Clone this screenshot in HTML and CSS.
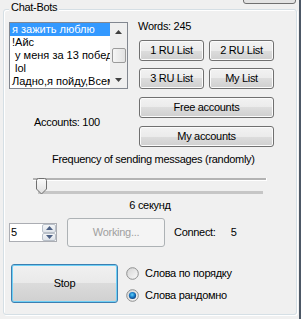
FILE: index.html
```html
<!DOCTYPE html>
<html>
<head>
<meta charset="utf-8">
<link rel="stylesheet" href="styles.css">
</head>
<body>
<div class="window">
  <div class="main">
    <div class="topbtn"></div>
    <div class="group">
      <span class="legend">Chat-Bots</span>
      <div class="r1">
        <div class="listbox">
          <ul class="items">
            <li class="sel">я зажить люблю</li>
            <li>!Айс</li>
            <li> у меня за 13 побед</li>
            <li> lol</li>
            <li>Ладно,я пойду,Всем</li>
          </ul>
          <div class="vscroll">
            <div class="sb-btn"><svg width="7" height="4" viewBox="0 0 7 4"><polygon points="0,4 3.5,0 7,4" fill="#404040"/></svg></div>
            <div class="sb-track"><div class="sb-thumb"></div></div>
            <div class="sb-btn"><svg width="7" height="4" viewBox="0 0 7 4"><polygon points="0,0 7,0 3.5,4" fill="#404040"/></svg></div>
          </div>
        </div>
        <div class="lists">
          <div class="words">Words: 245</div>
          <div class="btngrid">
            <button class="btn">1 RU List</button>
            <button class="btn">2 RU List</button>
            <button class="btn">3 RU List</button>
            <button class="btn">My List</button>
          </div>
        </div>
      </div>
      <div class="r2">
        <div class="acc-label">Accounts: 100</div>
        <div class="acc-btns">
          <button class="btn">Free accounts</button>
          <button class="btn">My accounts</button>
        </div>
      </div>
      <div class="freq">Frequency of sending messages (randomly)</div>
      <div class="slider">
        <div class="track"></div>
        <div class="ticks"></div>
        <svg class="thumb" width="11" height="17" viewBox="0 0 11 17">
          <defs>
            <linearGradient id="tg" x1="0" y1="0" x2="0" y2="1">
              <stop offset="0" stop-color="#fbfbfb"/>
              <stop offset="1" stop-color="#dedede"/>
            </linearGradient>
          </defs>
          <path d="M0.5,2.5 Q0.5,0.5 2.5,0.5 H8.5 Q10.5,0.5 10.5,2.5 V11 L5.5,16 L0.5,11 Z" fill="url(#tg)" stroke="#6f6f6f"/>
        </svg>
      </div>
      <div class="secs">6 секунд</div>
      <div class="r6">
        <div class="spin">
          <span class="spin-val">5</span>
          <div class="updown">
            <div class="ud"><svg width="7" height="4" viewBox="0 0 7 4"><polygon points="0,4 3.5,0 7,4" fill="#4d6185"/></svg></div>
            <div class="ud"><svg width="7" height="4" viewBox="0 0 7 4"><polygon points="0,0 7,0 3.5,4" fill="#4d6185"/></svg></div>
          </div>
        </div>
        <button class="btn working" disabled>Working...</button>
        <span class="connect">Connect:</span>
        <span class="cval">5</span>
      </div>
      <div class="r7">
        <button class="btn stop">Stop</button>
        <div class="radios">
          <label class="radio">
            <svg width="13" height="13" viewBox="0 0 13 13">
              <defs>
                <linearGradient id="rg1" x1="0" y1="0" x2="1" y2="1">
                  <stop offset="0" stop-color="#d3d3d3"/>
                  <stop offset="1" stop-color="#fbfbfb"/>
                </linearGradient>
              </defs>
              <circle cx="6.5" cy="6.5" r="5.8" fill="url(#rg1)" stroke="#8e8f8f"/>
            </svg>
            <span>Слова по порядку</span>
          </label>
          <label class="radio">
            <svg width="13" height="13" viewBox="0 0 13 13">
              <defs>
                <linearGradient id="rg2" x1="0" y1="0" x2="1" y2="1">
                  <stop offset="0" stop-color="#d3d3d3"/>
                  <stop offset="1" stop-color="#fbfbfb"/>
                </linearGradient>
                <radialGradient id="rd" cx="0.45" cy="0.4" r="0.6">
                  <stop offset="0" stop-color="#5fd2fa"/>
                  <stop offset="0.55" stop-color="#1b7ec9"/>
                  <stop offset="1" stop-color="#0c3f7c"/>
                </radialGradient>
              </defs>
              <circle cx="6.5" cy="6.5" r="5.8" fill="url(#rg2)" stroke="#8e8f8f"/>
              <circle cx="6.5" cy="6.5" r="3.6" fill="url(#rd)"/>
            </svg>
            <span>Слова рандомно</span>
          </label>
        </div>
      </div>
    </div>
  </div>
  <div class="edge"></div>
</div>
</body>
</html>
```
FILE: styles.css
```css
* { box-sizing: border-box; }
body {
  margin: 0;
  background: #f0f0f0;
  font-family: "Liberation Sans", Arial, sans-serif;
  font-size: 11px;
  line-height: 13px;
  letter-spacing: -0.3px;
  color: #000;
  overflow: hidden;
}
.window { display: flex; width: 301px; height: 319px; }
.main { position: relative; flex: 1; }
.edge { width: 2px; background: #4d5866; }
.topbtn {
  position: absolute; top: -17px; left: 243px;
  width: 53px; height: 21px;
  border: 1px solid #707070; border-radius: 3px;
  background: #e3e3e3;
}
.group {
  position: relative;
  margin: 9px 0 0 3px;
  width: 294px; height: 306px;
  border: 1px solid #d5dfe5; border-radius: 3px;
  box-shadow: 1px 1px 0 #fff, inset 1px 1px 0 #fff;
}
.legend {
  position: absolute; top: -9px; left: 5px;
  padding: 0 2px; background: #f0f0f0;
}
.r1 { display: flex; align-items: flex-start; padding: 12px 0 0 5px; }
.listbox {
  display: flex; width: 119px; height: 67px;
  border: 1px solid #828790; background: #fff;
  margin-right: 11px;
}
.items { list-style: none; margin: 0; padding: 0; flex: 1; min-width: 0; overflow: hidden; }
.items li { height: 13px; line-height: 13px; padding-left: 2px; white-space: pre; overflow: hidden; letter-spacing: 0; }
.items li.sel { background: #3399ff; color: #fff; }
.vscroll { width: 17px; display: flex; flex-direction: column; background: #efefef; }
.sb-btn { height: 17px; display: flex; align-items: center; justify-content: center; }
.sb-track { flex: 1; padding-top: 8px; }
.sb-thumb {
  margin-left: 2px; width: 14px; height: 15px;
  border: 1px solid #9b9b9b; border-radius: 2px;
  background: linear-gradient(to right, #f6f6f6, #e2e2e2);
}
.lists { margin-top: -2px; width: 135px; }
.words { margin: 0 0 7px -1px; height: 13px; }
.btngrid { display: grid; grid-template-columns: 65px 65px; column-gap: 5px; row-gap: 7px; }
.btn {
  font: inherit; letter-spacing: inherit; color: #000;
  margin: 0; padding: 0; height: 21px;
  border: 1px solid #707070; border-radius: 3px;
  background: linear-gradient(#f2f2f2 0%, #ebebeb 50%, #dddddd 50%, #cfcfcf 100%);
  box-shadow: inset 0 0 0 1px #fbfbfb;
}
.r2 { display: flex; align-items: center; margin-top: 8px; padding-left: 5px; }
.acc-label { width: 130px; padding-left: 25px; }
.acc-btns { display: flex; flex-direction: column; gap: 8px; width: 135px; }
.freq { margin-top: 6px; padding-left: 48px; height: 13px; }
.slider { position: relative; margin: 12px 0 0 29px; width: 234px; }
.track {
  margin-top: 7px; height: 3px;
  background: #b3b3b3;
  border-bottom: 1px solid #fff; border-right: 1px solid #fff;
}
.ticks { margin: 10px 0 0 5px; width: 225px; height: 3px; background: #c6c6c6; }
.thumb { position: absolute; left: 3px; top: 0; }
.secs { margin-top: 5px; text-align: center; height: 13px; }
.r6 { display: flex; align-items: center; margin-top: 6px; padding-left: 5px; height: 29px; }
.spin {
  display: flex; width: 48px; height: 19px;
  border: 1px solid #abadb3; background: #fff;
}
.spin-val { flex: 1; padding-left: 1px; line-height: 17px; }
.updown { width: 14px; display: flex; flex-direction: column; }
.ud {
  flex: 1; display: flex; align-items: center; justify-content: center;
  border: 1px solid #b9c0c9; border-radius: 2px;
  background: linear-gradient(#f4f6f8, #dfe4ea);
}
.working {
  margin-left: 10px; width: 98px; height: 29px;
  border-color: #adb2b5; background: #f4f4f4; color: #a0a0a0;
  box-shadow: none;
}
.connect { margin-left: 9px; }
.cval { margin-left: 15px; }
.r7 { display: flex; align-items: flex-start; margin-top: 17px; padding-left: 7px; }
.stop {
  width: 107px; height: 39px;
  border-color: #3c7fb1;
  box-shadow: inset 0 0 0 1px #6fd0f6, 0 0 0 0 #fff;
  background: linear-gradient(#f1f1f1 0%, #e9e9e9 50%, #dbdbdb 50%, #d0d0d0 100%);
}
.radios { margin-left: 8px; padding-top: 3px; display: flex; flex-direction: column; gap: 9px; }
.radio { display: flex; align-items: center; gap: 6px; height: 13px; }
.radio svg { flex: none; }
```
